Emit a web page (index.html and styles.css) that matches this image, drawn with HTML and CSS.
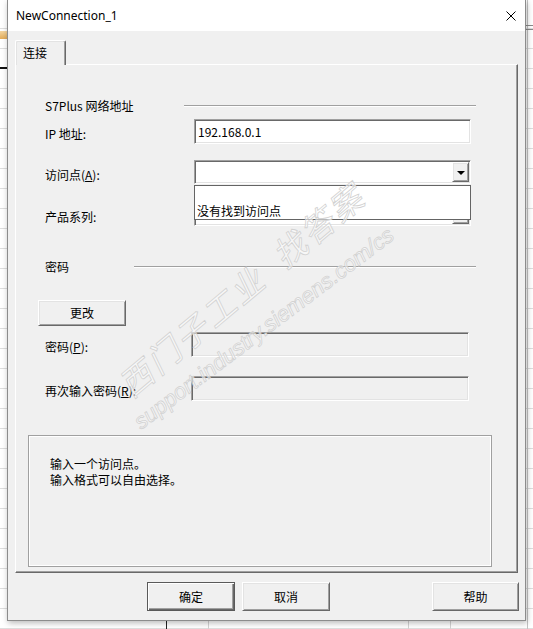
FILE: index.html
```html
<!DOCTYPE html>
<html lang="zh-CN">
<head>
<meta charset="utf-8">
<title>NewConnection_1</title>
<link rel="stylesheet" href="styles.css">
</head>
<body>
<div class="dialog">
  <div class="titlebar">
    <span class="title">NewConnection_1</span>
    <svg class="close" width="10" height="10" viewBox="0 0 10 10"><path d="M0.5 0.5 L9.5 9.5 M9.5 0.5 L0.5 9.5" stroke="#000" stroke-width="1" fill="none"/></svg>
  </div>
  <div class="client">
    <div class="tabs"><div class="tab">连接</div></div>
    <div class="panel">
      <div class="section s1"><span class="sec-label w1">S7Plus 网络地址</span><span class="sec-line l1"></span></div>
      <div class="row r-ip"><span class="lbl">IP 地址:</span><div class="field sunken">192.168.0.1</div></div>
      <div class="row r-ap">
        <span class="lbl">访问点(<u>A</u>):</span>
        <div class="combo sunken"><span class="combo-btn raised"><span class="arrow"></span></span></div>
        <div class="dropdown">没有找到访问点</div>
      </div>
      <div class="row r-prod"><span class="lbl">产品系列:</span><div class="combo sunken"><span class="combo-btn raised"><span class="arrow"></span></span></div></div>
      <div class="section s2"><span class="sec-label w2">密码</span><span class="sec-line l2"></span></div>
      <div class="btn-row"><button class="btn raised change">更改</button></div>
      <div class="row r-pw"><span class="lbl narrow">密码(<u>P</u>):</span><div class="field pw sunken disabled"></div></div>
      <div class="row r-pw2"><span class="lbl narrow">再次输入密码(<u>R</u>):</span><div class="field pw sunken disabled"></div></div>
      <div class="info">
        <p>输入一个访问点。</p>
        <p>输入格式可以自由选择。</p>
      </div>
    </div>
    <div class="buttons">
      <button class="btn default">确定</button>
      <button class="btn raised">取消</button>
      <button class="btn raised help">帮助</button>
    </div>
  </div>
  <div class="wm wm1">西门子工业&nbsp;&nbsp;找答案</div>
  <div class="wm wm2">support.industry.siemens.com/cs</div>
</div>
</body>
</html>
```

FILE: styles.css
```css
html, body {
  margin: 0;
  padding: 0;
}
body {
  width: 533px;
  height: 629px;
  overflow: hidden;
  background-color: #fff;
  background-image:
    linear-gradient(#f5d6a0, #e2ab58),
    linear-gradient(#111, #111),
    linear-gradient(#8a8a8a, #8a8a8a),
    linear-gradient(#8a8a8a, #8a8a8a),
    linear-gradient(#222, #222),
    linear-gradient(#d4d4d4, #d4d4d4),
    linear-gradient(#d4d4d4, #d4d4d4),
    linear-gradient(#d4d4d4, #d4d4d4),
    linear-gradient(#c4c4c4, #c4c4c4),
    repeating-linear-gradient(to bottom, transparent 0 19px, #dedede 19px 20px);
  background-repeat: no-repeat, no-repeat, no-repeat, no-repeat, no-repeat, no-repeat, no-repeat, no-repeat, no-repeat, repeat;
  background-position: 0 31px, 0 67px, 525px 25px, 525px 29px, 166px 0, 208px 0, 408px 0, 450px 0, 527px 0, 0 9px;
  background-size: 7px 8px, 7px 2px, 8px 1px, 8px 1px, 1px 100%, 1px 100%, 1px 100%, 1px 100%, 1px 100%, auto;
}

.dialog {
  position: relative;
  margin-left: 7px;
  width: 519px;
  height: 621px;
  box-sizing: border-box;
  border: 1px solid #8c8c8c;
  border-top: 0;
  background: #f0f0f0;
  display: flex;
  flex-direction: column;
  box-shadow: 1px 2px 6px rgba(0, 0, 0, 0.28);
  font-family: "Noto Sans CJK SC", "Noto Sans", sans-serif;
  font-size: 12px;
  line-height: 16px;
  color: #000;
  overflow: hidden;
}

.titlebar {
  height: 31px;
  flex: none;
  background: #fff;
  display: flex;
  align-items: center;
  justify-content: space-between;
  padding: 0 9px 0 8px;
}
.title {
  font-family: "Noto Sans", "Open Sans", sans-serif;
  font-size: 12px;
  color: #000;
}
.close {
  display: block;
}

.client {
  flex: 1;
  display: flex;
  flex-direction: column;
  padding: 9px 7px 0 7px;
}

.tabs {
  display: flex;
  height: 25px;
  position: relative;
  z-index: 1;
}
.tab {
  width: 51px;
  height: 25px;
  box-sizing: border-box;
  background: #f0f0f0;
  border: 1px solid #fff;
  border-bottom: 0;
  border-right-color: #696969;
  border-radius: 2px 2px 0 0;
  box-shadow: inset -1px 0 0 #a0a0a0, inset 1px 1px 0 #e3e3e3;
  padding: 4px 0 0 7px;
}

.panel {
  margin-top: -1px;
  height: 509px;
  box-sizing: border-box;
  border: 1px solid;
  border-color: #fff #696969 #696969 #fff;
  box-shadow: inset -1px -1px 0 #a0a0a0;
  display: flex;
  flex-direction: column;
}

.section {
  display: flex;
  align-items: center;
  height: 16px;
  padding-left: 29px;
}
.s1 { margin-top: 33px; }
.s2 { margin-top: 33px; }
.sec-label { flex: none; }
.w1 { width: 139px; }
.w2 { width: 89px; }
.sec-line {
  height: 1px;
  background: #a0a0a0;
  border-bottom: 1px solid #fff;
}
.l1 { width: 292px; }
.l2 { width: 342px; }

.row {
  display: flex;
  align-items: center;
  padding-left: 29px;
}
.lbl {
  width: 149px;
  flex: none;
  padding-top: 5px;
}
.lbl.narrow { width: 146px; }

.sunken {
  border: 1px solid;
  border-color: #a0a0a0 #fff #fff #a0a0a0;
  box-shadow: inset 1px 1px 0 #696969, inset -1px -1px 0 #e3e3e3;
}
.raised {
  border: 1px solid;
  border-color: #fff #696969 #696969 #fff;
  box-shadow: inset 1px 1px 0 #e3e3e3, inset -1px -1px 0 #a0a0a0;
  background: #f0f0f0;
}

.field {
  width: 277px;
  height: 25px;
  box-sizing: border-box;
  background: #fff;
  padding: 0 0 0 3px;
  display: flex;
  align-items: center;
}
.field.pw { width: 278px; }
.field.disabled { background: #f0f0f0; }

.r-ip { margin-top: 5px; }
.r-ap { margin-top: 16px; position: relative; }
.r-prod { margin-top: 18px; }
.r-pw { margin-top: 6px; }
.r-pw2 { margin-top: 19px; }

.combo {
  width: 277px;
  height: 24px;
  box-sizing: border-box;
  background: #fff;
  padding: 1px;
  display: flex;
  justify-content: flex-end;
}
.combo-btn {
  width: 17px;
  box-sizing: border-box;
  display: flex;
  align-items: center;
  justify-content: center;
}
.arrow {
  width: 0;
  height: 0;
  border-left: 4px solid transparent;
  border-right: 4px solid transparent;
  border-top: 4px solid #000;
  margin-top: 1px;
}

.dropdown {
  position: absolute;
  left: 178px;
  top: 25px;
  width: 277px;
  height: 35px;
  box-sizing: border-box;
  border: 1px solid #646464;
  background: #fff;
  display: flex;
  align-items: flex-end;
  padding: 0 0 0 2px;
  z-index: 2;
}

.btn-row {
  display: flex;
  margin-top: 25px;
  padding-left: 22px;
}
.btn {
  font-family: "Noto Sans CJK SC", "Noto Sans", sans-serif;
  font-size: 12px;
  line-height: 16px;
  color: #000;
  padding: 0;
  margin: 0;
  box-sizing: border-box;
  width: 88px;
  height: 29px;
}
.change { height: 26px; }

.info {
  margin: 34px 0 0 12px;
  width: 464px;
  height: 132px;
  box-sizing: border-box;
  border: 1px solid #a0a0a0;
  box-shadow: inset 0 0 0 1px #fff;
  padding: 20px 0 0 21px;
}
.info p { margin: 0; }

.buttons {
  display: flex;
  margin-top: 9px;
  padding-left: 132px;
  gap: 7px;
}
.btn.default {
  border: 1px solid #5a5a5a;
  background: #f0f0f0;
  box-shadow: inset 1px 1px 0 #fff, inset -1px -1px 0 #696969, inset -2px -2px 0 #a0a0a0;
}
.btn.help {
  margin-left: auto;
  margin-right: -1px;
  width: 87px;
}

.wm {
  position: absolute;
  z-index: 3;
  pointer-events: none;
  white-space: nowrap;
  color: rgba(255, 255, 255, 0.55);
  -webkit-text-stroke: 0.8px #d2d2d2;
  transform-origin: 0 100%;
  font-style: italic;
}
.wm1 {
  left: 126px;
  top: 366px;
  height: 36px;
  line-height: 36px;
  font-size: 33px;
  letter-spacing: 3px;
  transform: rotate(-40deg);
}
.wm2 {
  left: 136px;
  top: 410px;
  height: 24px;
  line-height: 24px;
  font-family: "Liberation Sans", sans-serif;
  font-size: 22px;
  transform: rotate(-37deg);
}
```
